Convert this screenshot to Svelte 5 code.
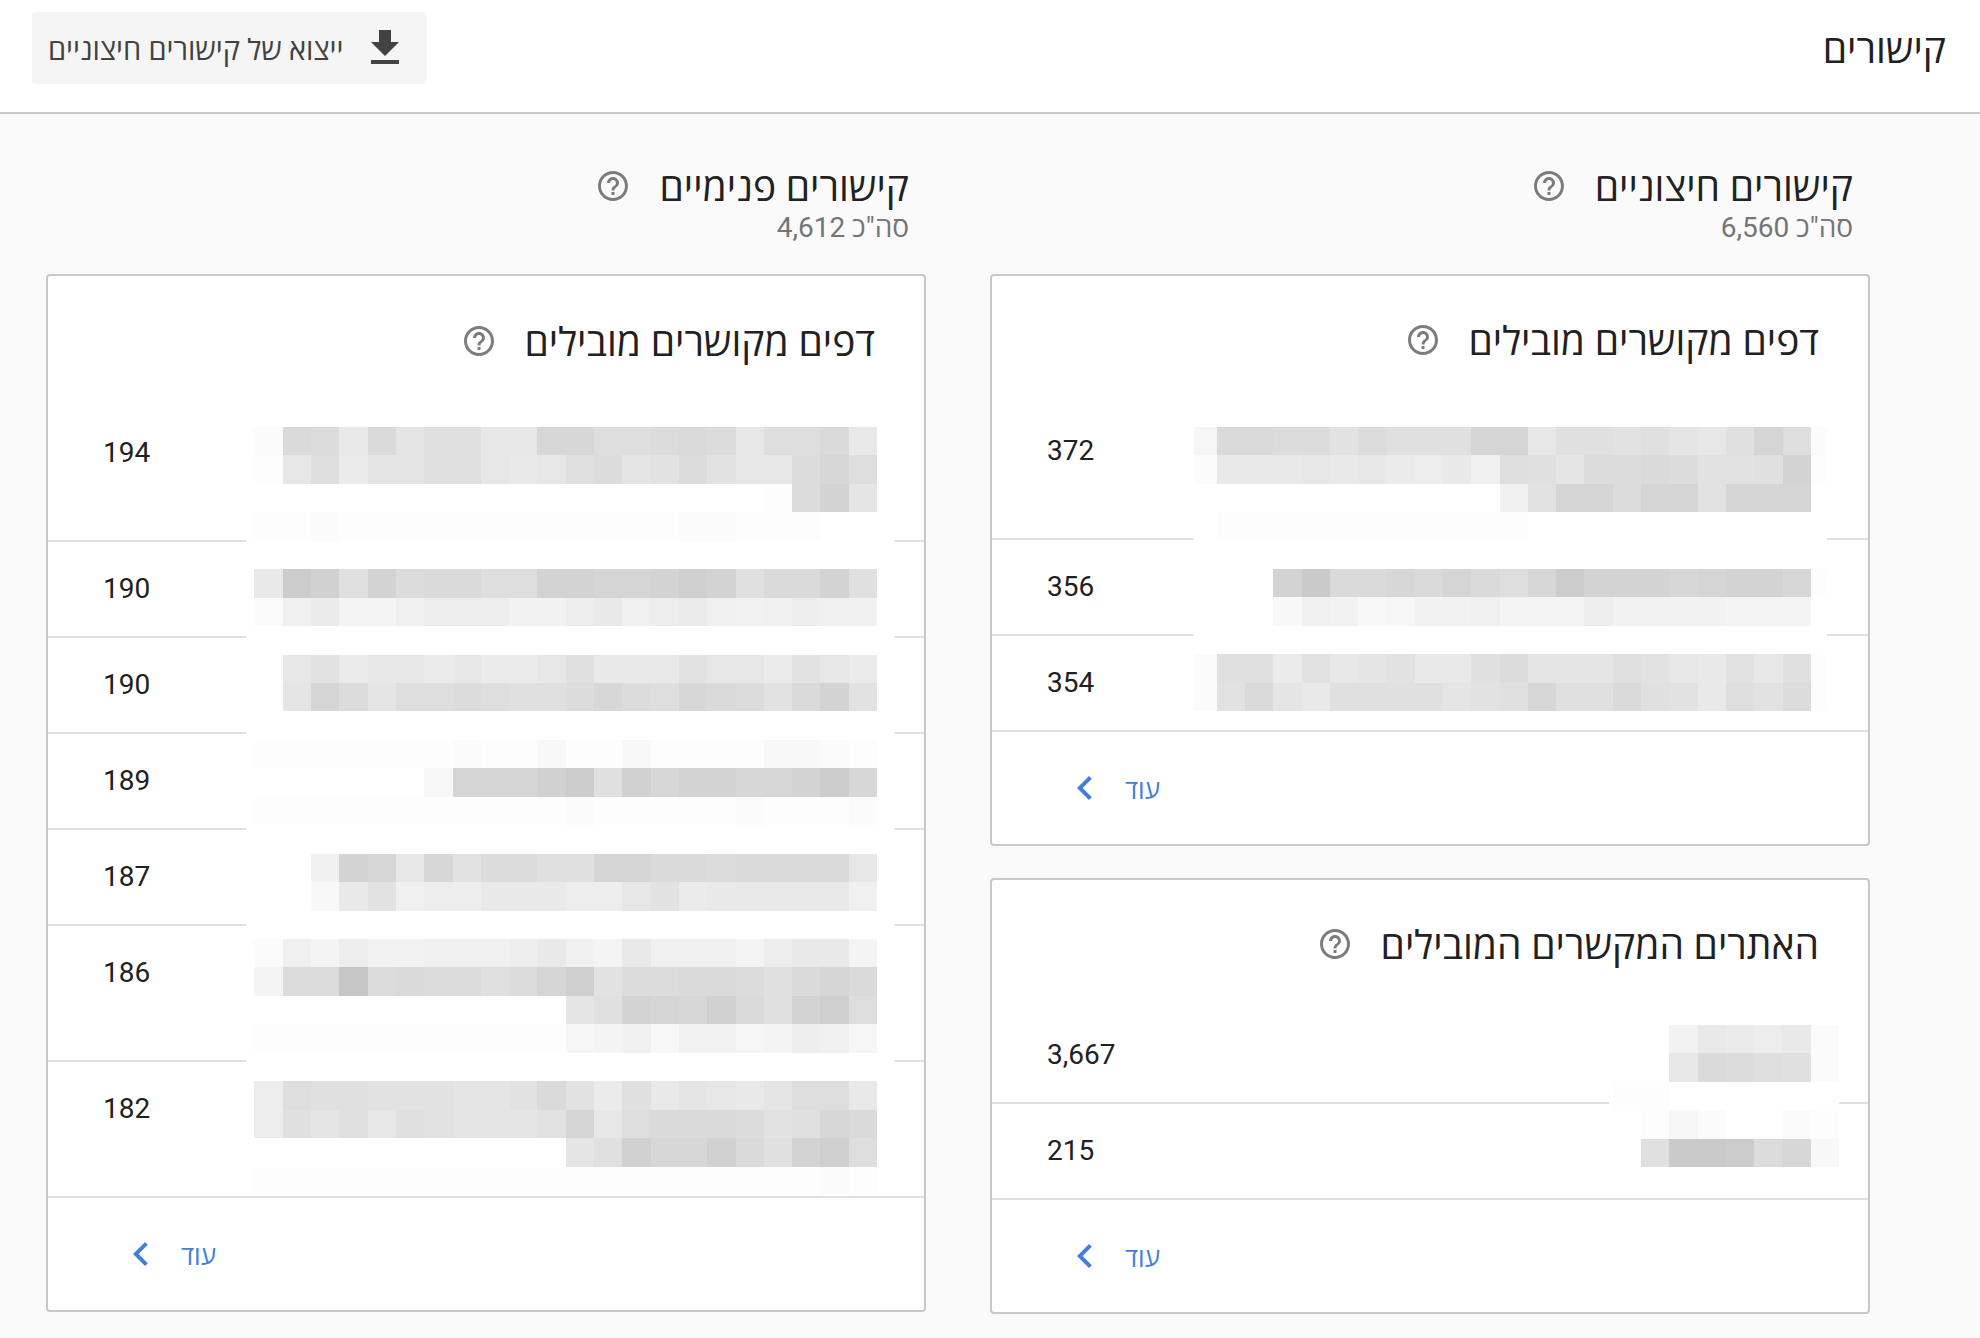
<script lang="ts">
  type Mosaic = { kind: string; start: number; span: number; cells: string[] };
  type Row = { count: string; tall?: boolean };
  type Card = { title: string; rows: Row[]; mosaic: Mosaic };
  type Section = { name: string; title: string; total: string; cards: Card[] };

  // Redacted names: one letter per block, a = lightest, z = darkest, dot = blank
  const externalPages: Mosaic = {
    kind: 'pages',
    start: 0.2,
    span: 22.37,
    cells: [
      'dqqppmpnnnssknnmnlknsob',
      'bjjjkjkihjgonlppqpmmnta',
      '...........gmsspssmsss.',
      '.aaaaaaaaaaa...........',
      '',
      '...txqqrqsqorwtttrsttra',
      '...cgfcdffgeeehffffeee.',
      '',
      'bnnimklmjjnplllnmkjmkna',
      'bmqljnnnnlmnrnnqnmjompa',
    ],
  };

  const linkingSites: Mosaic = {
    kind: 'sites',
    start: -0.13,
    span: 8.13,
    cells: ['..fjihjb', '..kqponb', 'aa......', '.adb..ba', '.nxxwprc'],
  };

  const internalPages: Mosaic = {
    kind: 'internal',
    start: -0.3,
    span: 22.9,
    cells: [
      'bqpjqlnnkkrroopqpkooqj',
      'akoillnnkjknplmpmkkpro',
      '..................aptl',
      'aabaaaaaaaaaaaabbaaa..',
      '',
      'jwuntpqqoottsstvtnqqtn',
      'bgieeghhhffhjghigfghgg',
      '',
      '.kmikkikiiknjjjmkkimki',
      '.lsplooponnprporqpmqtm',
      '',
      'aaaaaaabaacaacaaaaccba',
      '......csssuwnurttrrtwr',
      'aaaaaaaaaaabaaaaabaaab',
      '',
      '..gtrkrmppnnssqqpqqqqk',
      '..cjmghhjjjhhkmijjjjjg',
      '',
      'bgehffggghjgejgggehjje',
      'eppzpqppnpsvmppqqpnqsq',
      '...........lntsruqntvo',
      'aaaaaaaaaaadegcffdehgd',
      '',
      'honnmmmllmqminjlkjlooj',
      'hnlnknmlllmskoqqqpmnrq',
      '...........lnurruqntvo',
      'aaaaaaaaaaaaaaaaaaaaba',
    ],
  };

  const sections: Section[] = [
    {
      name: 'external',
      title: 'קישורים חיצוניים',
      total: '6,560',
      cards: [
        {
          title: 'דפים מקושרים מובילים',
          rows: [{ count: '372', tall: true }, { count: '356' }, { count: '354' }],
          mosaic: externalPages,
        },
        {
          title: 'האתרים המקשרים המובילים',
          rows: [{ count: '3,667' }, { count: '215' }],
          mosaic: linkingSites,
        },
      ],
    },
    {
      name: 'internal',
      title: 'קישורים פנימיים',
      total: '4,612',
      cards: [
        {
          title: 'דפים מקושרים מובילים',
          rows: [
            { count: '194', tall: true },
            { count: '190' },
            { count: '190' },
            { count: '189' },
            { count: '187' },
            { count: '186', tall: true },
            { count: '182', tall: true },
          ],
          mosaic: internalPages,
        },
      ],
    },
  ];

  function shade(letter: string) {
    const level = 255 - Math.round((letter.charCodeAt(0) - 96) * 2.2);
    return `rgb(${level}, ${level}, ${level})`;
  }
</script>

{#snippet help()}
  <button class="help" aria-label="עזרה">
    <svg viewBox="0 0 24 24" aria-hidden="true">
      <path d="M11 18h2v-2h-2v2zm1-16C6.48 2 2 6.48 2 12s4.48 10 10 10 10-4.48 10-10S17.52 2 12 2zm0 18c-4.41 0-8-3.59-8-8s3.59-8 8-8 8 3.59 8 8-3.59 8-8 8zm0-14c-2.21 0-4 1.79-4 4h2c0-1.1.9-2 2-2s2 .9 2 2c0 2-3 1.75-3 5h2c0-2.25 3-2.5 3-5 0-2.21-1.79-4-4-4z" />
    </svg>
  </button>
{/snippet}

<div class="page" dir="rtl" lang="he">
  <header>
    <h1>קישורים</h1>
    <button class="export">
      <svg viewBox="0 0 24 24" aria-hidden="true">
        <path d="M19 9h-4V3H9v6H5l7 7 7-7zM5 18v2h14v-2H5z" />
      </svg>
      <span>ייצוא של קישורים חיצוניים</span>
    </button>
  </header>

  <main>
    {#each sections as section}
      <section class={section.name}>
        <div class="section-head">
          <div class="heading">
            <h2>{section.title}</h2>
            {@render help()}
          </div>
          <p>סה"כ {section.total}</p>
        </div>

        {#each section.cards as card}
          <article class="card">
            <div class="card-head heading">
              <h3>{card.title}</h3>
              {@render help()}
            </div>
            <div class="rows">
              <table aria-label={card.title}>
                <tbody>
                  {#each card.rows as row}
                    <tr class:tall={row.tall}>
                      <td class="name"></td>
                      <td class="count">{row.count}</td>
                    </tr>
                  {/each}
                </tbody>
              </table>
              <svg
                class="mosaic {card.mosaic.kind}"
                viewBox="{card.mosaic.start} 0 {card.mosaic.span} {card.mosaic.cells.length}"
                preserveAspectRatio="none"
                shape-rendering="crispEdges"
                aria-hidden="true"
              >
                {#each card.mosaic.cells as line, y}
                  {#each line as letter, x}
                    {#if letter !== '.'}
                      <rect {x} {y} width="1" height="1" fill={shade(letter)} />
                    {/if}
                  {/each}
                {/each}
              </svg>
            </div>
            <footer>
              <a href="#more">
                <span>עוד</span>
                <svg viewBox="0 0 24 24" aria-hidden="true">
                  <path d="M15.41 7.41L14 6l-6 6 6 6 1.41-1.41L10.83 12z" />
                </svg>
              </a>
            </footer>
          </article>
        {/each}
      </section>
    {/each}
  </main>
</div>

<style>
  :global(body) {
    margin: 0;
    background: #fafafa;
  }

  .page {
    color: #212121;
    font-family: Roboto, 'Open Sans', 'Noto Sans', sans-serif;
    font-size: 28px;
    line-height: 40px;
  }

  h1, h2, h3, p {
    margin: 0;
    font-weight: 400;
  }

  h1, h2, h3 {
    padding-top: 4px;
    font-size: 39px;
    font-weight: 500;
  }

  button {
    border: none;
    font-family: inherit;
    cursor: pointer;
  }

  svg {
    display: block;
    fill: currentColor;
  }

  header {
    display: flex;
    justify-content: space-between;
    align-items: flex-start;
    padding: 12px 34px 28px 32px;
    background: #fff;
    border-bottom: 2px solid #c8c8c8;
  }

  h1 {
    padding-top: 18px;
  }

  .export {
    display: flex;
    align-items: center;
    gap: 18px;
    height: 72px;
    padding: 0 18px 0 16px;
    border-radius: 4px;
    background: #f5f5f5;
    color: #424242;
    font-size: 29px;
  }

  .export svg {
    width: 48px;
    height: 48px;
  }

  main {
    display: grid;
    grid-template-columns: 1fr 1fr;
    align-items: start;
    gap: 64px;
    padding: 50px 110px 24px 46px;
  }

  .section-head {
    margin-bottom: 26px;
    padding: 0 17px;
  }

  .section-head p {
    color: #757575;
  }

  .heading {
    display: flex;
    align-items: center;
    gap: 28px;
  }

  .help {
    padding: 0;
    background: none;
    color: #7c7c7c;
  }

  .help svg {
    width: 36px;
    height: 36px;
  }

  .card {
    background: #fff;
    border: 2px solid #c8c8c8;
    border-radius: 4px;
  }

  .card + .card {
    margin-top: 32px;
  }

  .card-head {
    box-sizing: border-box;
    height: 128px;
    padding: 0 49px;
  }

  .internal .card-head {
    height: 130px;
  }

  .rows {
    position: relative;
  }

  table {
    width: 100%;
    border-collapse: separate;
    border-spacing: 0;
  }

  td {
    box-sizing: border-box;
    height: 96px;
    padding: 27px 48px 26px;
    border-bottom: 2px solid #e0e0e0;
    vertical-align: top;
  }

  .tall td {
    height: 136px;
  }

  .count {
    padding-left: 55px;
    text-align: left;
  }

  .mosaic {
    position: absolute;
    background: #fff;
  }

  .pages {
    top: 23px;
    right: 41px;
    width: 633px;
    height: 284px;
  }

  .sites {
    top: 17px;
    right: 29px;
    width: 230px;
    height: 142px;
  }

  .internal .mosaic {
    top: 21px;
    right: 30px;
    width: 648px;
    height: 768px;
  }

  footer {
    display: flex;
    justify-content: flex-end;
    align-items: center;
    height: 112px;
    padding-left: 69px;
  }

  a {
    display: flex;
    align-items: center;
    gap: 16px;
    color: #427fdb;
    font-size: 26px;
    text-decoration: none;
  }

  a span {
    padding-top: 4px;
  }

  a svg {
    width: 48px;
    height: 48px;
  }
</style>
